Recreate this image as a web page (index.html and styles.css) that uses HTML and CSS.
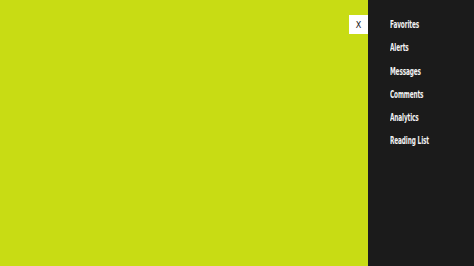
FILE: index.html
```html
<!DOCTYPE html>
<html>
<head>
<meta charset="utf-8">
<link rel="stylesheet" href="styles.css">
</head>
<body>
<div class="page">
  <main class="content"></main>
  <aside class="sidebar">
    <button class="close">X</button>
    <nav class="menu">
      <a class="item">Favorites</a>
      <a class="item">Alerts</a>
      <a class="item">Messages</a>
      <a class="item">Comments</a>
      <a class="item">Analytics</a>
      <a class="item">Reading List</a>
    </nav>
  </aside>
</div>
</body>
</html>
```
FILE: styles.css
```css
html, body { margin: 0; padding: 0; height: 100%; }
body { font-family: "DejaVu Sans Condensed", "DejaVu Sans", sans-serif; font-stretch: condensed; }
.page { display: flex; height: 266px; }
.content { flex: 1; background: #c8dc14; }
.sidebar { position: relative; width: 106px; background: #1b1b1b; }
.close {
  position: absolute; left: -19px; top: 15px;
  width: 19px; height: 19px; padding: 2px 0 0; border: 0;
  background: #ffffff; color: #111;
  font-family: "DejaVu Sans", sans-serif; font-size: 8px; line-height: 17px;
  text-align: center; box-sizing: border-box;
}
.menu { display: flex; flex-direction: column; align-items: flex-start; padding: 18px 0 0 22px; gap: 11px; }
.item {
  display: inline-block;
  color: #f2f2f2; font-weight: bold; font-size: 10.5px; line-height: 12.3px;
  letter-spacing: -0.2px;
  transform: scaleX(0.61); transform-origin: left center;
}
```
